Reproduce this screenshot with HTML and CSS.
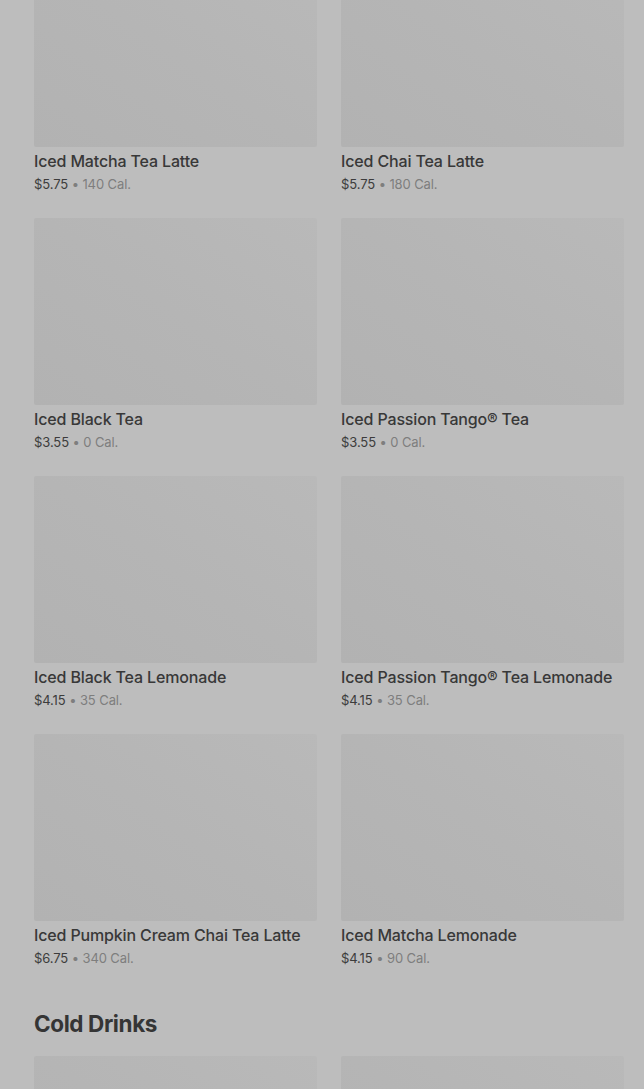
FILE: index.html
```html
<!DOCTYPE html>
<html lang="en">
<head>
<meta charset="UTF-8">
<meta name="viewport" content="width=device-width, initial-scale=1.0">
<title>Menu - Iced Tea</title>
<link rel="stylesheet" href="styles.css">
</head>
<body>
<div class="page">
  <div class="grid">
    <div class="item">
      <div class="thumb"></div>
      <h4>Iced Matcha Tea Latte</h4>
      <p class="meta">$5.75 <span class="cal">• 140 Cal.</span></p>
    </div>
    <div class="item">
      <div class="thumb"></div>
      <h4>Iced Chai Tea Latte</h4>
      <p class="meta">$5.75 <span class="cal">• 180 Cal.</span></p>
    </div>
    <div class="item">
      <div class="thumb"></div>
      <h4>Iced Black Tea</h4>
      <p class="meta">$3.55 <span class="cal">• 0 Cal.</span></p>
    </div>
    <div class="item">
      <div class="thumb"></div>
      <h4>Iced Passion Tango® Tea</h4>
      <p class="meta">$3.55 <span class="cal">• 0 Cal.</span></p>
    </div>
    <div class="item">
      <div class="thumb"></div>
      <h4>Iced Black Tea Lemonade</h4>
      <p class="meta">$4.15 <span class="cal">• 35 Cal.</span></p>
    </div>
    <div class="item">
      <div class="thumb"></div>
      <h4>Iced Passion Tango® Tea Lemonade</h4>
      <p class="meta">$4.15 <span class="cal">• 35 Cal.</span></p>
    </div>
    <div class="item">
      <div class="thumb"></div>
      <h4>Iced Pumpkin Cream Chai Tea Latte</h4>
      <p class="meta">$6.75 <span class="cal">• 340 Cal.</span></p>
    </div>
    <div class="item">
      <div class="thumb"></div>
      <h4>Iced Matcha Lemonade</h4>
      <p class="meta">$4.15 <span class="cal">• 90 Cal.</span></p>
    </div>
  </div>

  <h2 class="heading">Cold Drinks</h2>

  <div class="grid">
    <div class="item">
      <div class="thumb"></div>
    </div>
    <div class="item">
      <div class="thumb"></div>
    </div>
  </div>
</div>
</body>
</html>
```

FILE: styles.css
```css
body {
  margin: 0;
  padding: 0;
  background-color: #bdbdbd;
  font-family: Inter, "Noto Sans", sans-serif;
  color: #383838;
  overflow: hidden;
}

.page {
  margin-top: -40px;
  padding: 0 20px 0 34px;
}

.grid {
  display: grid;
  grid-template-columns: 283px 283px;
  column-gap: 24px;
  row-gap: 24px;
}

.thumb {
  height: 187px;
  border-radius: 2px;
  background: linear-gradient(35deg, #b2b2b2 0%, #b5b5b5 50%, #b9b9b9 100%);
}

.item h4 {
  margin: 3px 0 0;
  font-size: 16px;
  font-weight: 500;
  line-height: 22px;
  letter-spacing: -0.15px;
  color: #383838;
  white-space: nowrap;
}

.meta {
  margin: 2px 0 0;
  font-size: 13px;
  line-height: 20px;
  letter-spacing: -0.1px;
  color: #3c3c3c;
}

.cal {
  color: #7e7e7e;
}

.heading {
  margin: 39px 0 15px;
  font-size: 22.5px;
  font-weight: 700;
  line-height: 34px;
  letter-spacing: -0.4px;
  color: #353535;
}
```
